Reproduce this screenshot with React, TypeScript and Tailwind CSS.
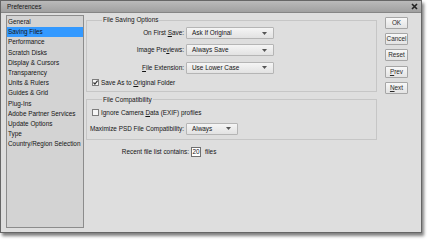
import React from 'react'

const sections = [
  'General',
  'Saving Files',
  'Performance',
  'Scratch Disks',
  'Display & Cursors',
  'Transparency',
  'Units & Rulers',
  'Guides & Grid',
  'Plug-Ins',
  'Adobe Partner Services',
  'Update Options',
  'Type',
  'Country/Region Selection',
]

function Arrow() {
  return (
    <svg width="5" height="3" viewBox="0 0 5 3" className="shrink-0">
      <path d="M0 0h5L2.5 3z" fill="#555" />
    </svg>
  )
}

function Dropdown({ value, width }: { value: string; width: string }) {
  return (
    <div
      className={`${width} h-[12px] flex items-center justify-between pl-[5px] pr-[6px] border border-[#b5b5b5] rounded-[1px] bg-gradient-to-b from-[#f5f5f5] to-[#e2e2e2]`}
    >
      <span>{value}</span>
      <Arrow />
    </div>
  )
}

function Checkbox({ checked }: { checked?: boolean }) {
  return (
    <svg width="7" height="7" viewBox="0 0 7 7" className="shrink-0">
      <rect x="0.5" y="0.5" width="6" height="6" fill="#f6f6f6" stroke="#7d7d7d" />
      {checked && <path d="M1.5 3.5l1.4 1.5L5.6 1.6" fill="none" stroke="#333" strokeWidth="1.2" />}
    </svg>
  )
}

function Button({ children }: { children: React.ReactNode }) {
  return (
    <div className="w-[23px] h-[12px] flex items-center justify-center border border-[#a6a6a6] rounded-[1px] bg-gradient-to-b from-[#f8f8f8] to-[#e3e3e3] text-[#2a2a2a]">
      {children}
    </div>
  )
}

export default function App() {
  return (
    <div className="w-[429px] h-[240px] bg-white font-['Liberation_Sans',Arial,sans-serif] text-[6.4px] leading-[8px] text-[#141414]">
      <div className="w-[422px] h-[233px] flex flex-col border border-[#666] bg-[#dedede] shadow-[2px_3px_3px_rgba(0,0,0,0.5)]">
        {/* Title bar */}
        <div className="h-[12px] shrink-0 flex items-center justify-between pl-[6px] pr-[3px] border-b border-[#858585] bg-gradient-to-b from-[#bababa] to-[#a0a0a0]">
          <span>Preferences</span>
          <svg width="7" height="7" viewBox="0 0 7 7">
            <path d="M1 1l5 5M6 1L1 6" stroke="#222" strokeWidth="1.6" />
          </svg>
        </div>

        <div className="flex-1 flex pl-[5px] pt-[2px]">
          {/* Section list */}
          <div className="w-[78px] h-[213px] shrink-0 border border-[#8c8c8c] bg-[#d3d3d3] pt-[1px]">
            {sections.map(s => (
              <div
                key={s}
                className={`h-[10.2px] flex items-center pl-[1px] ${s === 'Saving Files' ? 'bg-[#3399ff]' : ''}`}
              >
                {s}
              </div>
            ))}
          </div>

          {/* Options */}
          <div className="ml-[2px] w-[291px] shrink-0 flex flex-col">
            <fieldset className="mt-[1px] border border-[#c6c6c6] pl-[5px] pb-[4px]">
              <legend className="ml-[10px] px-[1px]">File Saving Options</legend>
              <div className="mt-[3px] flex flex-col gap-[5.4px]">
                <div className="flex items-center">
                  <span className="w-[97px] -ml-[5px] text-right">
                    On First <u>S</u>ave:
                  </span>
                  <div className="ml-[2px]">
                    <Dropdown value="Ask If Original" width="w-[88px]" />
                  </div>
                </div>
                <div className="flex items-center">
                  <span className="w-[97px] -ml-[5px] text-right">
                    Image Pre<u>v</u>iews:
                  </span>
                  <div className="ml-[2px]">
                    <Dropdown value="Always Save" width="w-[88px]" />
                  </div>
                </div>
                <div className="flex items-center">
                  <span className="w-[97px] -ml-[5px] text-right">
                    <u>F</u>ile Extension:
                  </span>
                  <div className="ml-[2px]">
                    <Dropdown value="Use Lower Case" width="w-[88px]" />
                  </div>
                </div>
              </div>
              <div className="mt-[5px] h-[8px] flex items-center gap-[2px]">
                <Checkbox checked />
                <span>
                  Save As to <u>O</u>riginal Folder
                </span>
              </div>
            </fieldset>

            <fieldset className="mt-[4px] border border-[#c6c6c6] pl-[5px] pb-[4px]">
              <legend className="ml-[10px] px-[1px]">File Compatibility</legend>
              <div className="mt-[5px] h-[8px] flex items-center gap-[2px]">
                <Checkbox />
                <span>
                  Ignore Camera <u>D</u>ata (EXIF) profiles
                </span>
              </div>
              <div className="mt-[6px] flex items-center">
                <span className="w-[97px] -ml-[5px] text-right">Maximize PSD File Compatibility:</span>
                <div className="ml-[2px]">
                  <Dropdown value="Always" width="w-[52px]" />
                </div>
              </div>
            </fieldset>

            <div className="mt-[7px] flex items-center">
              <span className="w-[103px] text-right">Recent file list contains:</span>
              <div className="ml-[2px] w-[10px] h-[10px] flex items-center justify-center border border-[#6f6f6f] bg-white">
                20
              </div>
              <span className="ml-[4px]">files</span>
            </div>
          </div>

          {/* Buttons */}
          <div className="ml-[8px] mt-[2px] flex flex-col gap-[4.2px]">
            <Button>OK</Button>
            <Button>Cancel</Button>
            <Button>Reset</Button>
            <Button>
              <u>P</u>rev
            </Button>
            <Button>
              <u>N</u>ext
            </Button>
          </div>
        </div>
      </div>
    </div>
  )
}
